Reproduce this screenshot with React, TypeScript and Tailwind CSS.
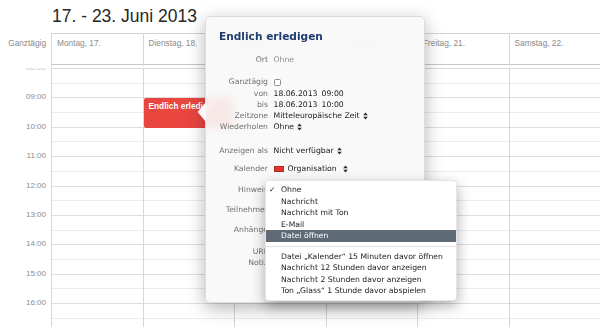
import React from "react";

// ============================================
// DATA
// ============================================

const days = [
    "Montag, 17.",
    "Dienstag, 18.",
    "Mittwoch, 19.",
    "Donnerstag, 20.",
    "Freitag, 21.",
    "Samstag, 22.",
];

const hours = ["08:00", "09:00", "10:00", "11:00", "12:00", "13:00", "14:00", "15:00", "16:00"];

// 18 half-hour rows fill the visible part of the grid
const slots = Array.from({ length: 18 }, (_, i) => i);

const alertOptions = ["Ohne", "Nachricht", "Nachricht mit Ton", "E-Mail", "Datei öffnen"];

const alertPresets = [
    "Datei „Kalender“ 15 Minuten davor öffnen",
    "Nachricht 12 Stunden davor anzeigen",
    "Nachricht 2 Stunden davor anzeigen",
    "Ton „Glass“ 1 Stunde davor abspielen",
];

// ============================================
// SMALL PARTS
// ============================================

function UpDown({ className = "ml-[3px]" }: { className?: string }) {
    return (
        <svg width="5" height="8" viewBox="0 0 5 8" className={`inline-block shrink-0 ${className}`}>
            <path d="M2.5 0.4L4.8 3.3H0.2Z M0.2 4.7H4.8L2.5 7.6Z" fill="#2b2b2b" />
        </svg>
    );
}

interface FieldProps {
    label: string;
    className?: string;
    children?: React.ReactNode;
}

function Field({ label, className = "", children }: FieldProps) {
    return (
        <div className={`flex h-[11.3px] items-center whitespace-nowrap leading-[11.3px] ${className}`}>
            <div className="w-[62px] shrink-0 text-right text-[#6f6f6f]">{label}</div>
            <div className="ml-[5.5px] flex items-center text-[#181818]">{children}</div>
        </div>
    );
}

// ============================================
// CALENDAR GRID
// ============================================

function WeekGrid() {
    return (
        <div className="flex h-[259px] overflow-hidden">
            {/* hour labels, each centred on its hour line */}
            <div className="w-[51px] shrink-0 -mt-[14.7px]">
                {hours.map((h) => (
                    <div
                        key={h}
                        className={`flex h-[29.4px] items-center justify-end pr-[5px] text-[8px] ${
                            h === "08:00" ? "text-[#c4c4c4]" : "text-[#8c8c8c]"
                        }`}
                    >
                        {h}
                    </div>
                ))}
            </div>

            <div className="grid flex-1 grid-cols-6 border-t border-[#d9d9d9]">
                {days.map((d, col) => (
                    <div key={d} className="relative border-l border-[#d6d6d6]">
                        {slots.map((s) => (
                            <div
                                key={s}
                                className={`h-[14.7px] border-b ${
                                    s % 2 === 0 ? "border-[#ececec]" : "border-[#dedede]"
                                }`}
                            />
                        ))}

                        {col === 1 && (
                            <div className="absolute left-0 right-[1px] top-[29.4px] h-[29.4px] overflow-hidden rounded-[2px] bg-[#e8463f] px-[5px] pt-[2.5px] text-[8.3px] font-bold leading-[10px] whitespace-nowrap text-white">
                                Endlich erledigen
                            </div>
                        )}
                    </div>
                ))}
            </div>
        </div>
    );
}

// ============================================
// EVENT POPOVER
// ============================================

function EventPopover() {
    return (
        <div
            className="absolute left-[205px] top-[16px] h-[287px] w-[220px] rounded-[5px] border border-[#d2d2d2]/70 bg-[#f8f8f8]/90 shadow-[0_5px_18px_rgba(0,0,0,0.3)] backdrop-blur-[5px]"
            style={{ fontFamily: '"DejaVu Sans", "Noto Sans", sans-serif' }}
        >
            {/* pointer toward the event */}
            <svg width="9" height="20" viewBox="0 0 9 20" className="absolute -left-[9px] top-[85px]">
                <path d="M9 0L0.6 10L9 20Z" fill="#f9f9f9" />
            </svg>

            <div className="px-[13px] pt-[11.5px] text-[10.6px] font-bold leading-[14px] text-[#1f3d6f]">
                Endlich erledigen
            </div>

            <div className="text-[7.7px]">
                <Field label="Ort" className="mt-[11.5px]">
                    <span className="text-[#8e8e8e]">Ohne</span>
                </Field>

                <Field label="Ganztägig" className="mt-[11px]">
                    <span className="mt-[1px] block h-[7px] w-[7px] rounded-[1.5px] border border-[#8d8d8d] bg-white" />
                </Field>
                <Field label="von">
                    <span>18.06.2013</span>
                    <span className="ml-[4px]">09:00</span>
                </Field>
                <Field label="bis">
                    <span>18.06.2013</span>
                    <span className="ml-[4px]">10:00</span>
                </Field>
                <Field label="Zeitzone">
                    <span>Mitteleuropäische Zeit</span>
                    <UpDown />
                </Field>
                <Field label="Wiederholen">
                    <span>Ohne</span>
                    <UpDown />
                </Field>

                <Field label="Anzeigen als" className="mt-[12.5px]">
                    <span>Nicht verfügbar</span>
                    <UpDown />
                </Field>

                <Field label="Kalender" className="mt-[6.7px]">
                    <span className="mr-[4px] block h-[6px] w-[10px] border border-[#b02a22] bg-[#e5362c]" />
                    <span>Organisation</span>
                    <UpDown className="ml-[6px]" />
                </Field>

                <Field label="Hinweis" className="mt-[9.7px]" />
                <Field label="Teilnehmer" className="mt-[8.7px]" />
                <Field label="Anhänge" className="mt-[8.7px]" />
                <Field label="URL" className="mt-[10.2px]" />
                <Field label="Notiz" />
            </div>
        </div>
    );
}

// ============================================
// ALERT MENU
// ============================================

function AlertMenu() {
    return (
        <div
            className="absolute left-[265px] top-[180px] w-[192px] rounded-[4px] border border-black/10 bg-white py-[3px] text-[7.7px] text-[#1a1a1a] shadow-[0_5px_14px_rgba(0,0,0,0.32)]"
            style={{ fontFamily: '"DejaVu Sans", "Noto Sans", sans-serif' }}
        >
            {alertOptions.map((o, i) => (
                <div
                    key={o}
                    className={`flex h-[11.6px] items-center leading-[11.6px] ${
                        o === "Datei öffnen" ? "bg-[#5f6a77] text-white" : ""
                    }`}
                >
                    <span className="w-[15px] shrink-0 pl-[3px]">{i === 0 ? "✓" : ""}</span>
                    <span>{o}</span>
                </div>
            ))}

            <div className="flex h-[8.7px] items-center">
                <div className="h-px w-full bg-[#e3e3e3]" />
            </div>

            {alertPresets.map((p) => (
                <div key={p} className="flex h-[11.6px] items-center whitespace-nowrap pl-[15px] leading-[11.6px]">
                    {p}
                </div>
            ))}
        </div>
    );
}

// ============================================
// APP
// ============================================

export default function App() {
    return (
        <div
            className="relative h-[327px] w-[600px] overflow-hidden bg-white"
            style={{ fontFamily: '"Liberation Sans", Arial, sans-serif' }}
        >
            <div className="flex h-[33px] items-center pl-[52px] text-[17.5px] text-[#262626]">
                17. - 23. Juni 2013
            </div>

            {/* all-day row */}
            <div className="flex h-[35px]">
                <div className="w-[51px] shrink-0 pr-[5px] pt-[5px] text-right text-[8.3px] leading-[10px] text-[#8a8a8a]">
                    Ganztägig
                </div>
                <div className="grid flex-1 grid-cols-6 border-t border-[#d4d4d4]">
                    {days.map((d) => (
                        <div
                            key={d}
                            className="border-l border-[#d6d6d6] border-b-[3px] border-b-white shadow-[inset_0_-1px_0_#c9c9c9] pl-[5px] pt-[4px] text-[8.3px] leading-[10px] text-[#8a8a8a]"
                        >
                            {d}
                        </div>
                    ))}
                </div>
            </div>

            <WeekGrid />

            <EventPopover />
            <AlertMenu />
        </div>
    );
}
